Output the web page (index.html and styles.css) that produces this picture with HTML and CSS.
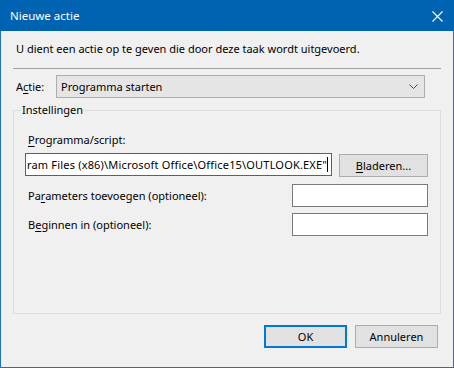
FILE: index.html
```html
<!DOCTYPE html>
<html lang="nl">
<head>
<meta charset="utf-8">
<title>Nieuwe actie</title>
<link rel="stylesheet" href="styles.css">
</head>
<body>
<div class="window">
  <div class="titlebar">
    <span class="title">Nieuwe actie</span>
    <svg class="close" width="11" height="11" viewBox="0 0 11 11"><path d="M0.5 0.5 L10.5 10.5 M10.5 0.5 L0.5 10.5" stroke="#fff" stroke-width="1.1" fill="none"/></svg>
  </div>
  <div class="content">
    <p class="intro">U dient een actie op te geven die door deze taak wordt uitgevoerd.</p>
    <div class="separator"></div>
    <div class="action-row">
      <span class="label">A<u>c</u>tie:</span>
      <div class="combo">
        <span>Programma starten</span>
        <svg width="9" height="5" viewBox="0 0 9 5"><path d="M0.5 0.5 L4.5 4.5 L8.5 0.5" stroke="#444" stroke-width="1" fill="none"/></svg>
      </div>
    </div>
    <fieldset class="group">
      <legend>Instellingen</legend>
      <div class="field-label"><u>P</u>rogramma/script:</div>
      <div class="program-row">
        <div class="textbox focused"><span class="path">ram Files (x86)\Microsoft Office\Office15\OUTLOOK.EXE"</span><span class="caret"></span></div>
        <div class="button browse"><u>B</u>laderen...</div>
      </div>
      <div class="param-row">
        <span>Pa<u>r</u>ameters toevoegen (optioneel):</span>
        <div class="textbox small"></div>
      </div>
      <div class="param-row">
        <span>B<u>e</u>ginnen in (optioneel):</span>
        <div class="textbox small"></div>
      </div>
    </fieldset>
    <div class="footer">
      <div class="button default">OK</div>
      <div class="button">Annuleren</div>
    </div>
  </div>
</div>
</body>
</html>
```
FILE: styles.css
```css
html, body {
  margin: 0;
  padding: 0;
  background: #f0f0f0;
}
body {
  font-family: "Noto Sans", "Open Sans", sans-serif;
  font-size: 11px;
  color: #000;
}
u { text-decoration-thickness: 1px; text-underline-offset: 2px; }
.window {
  width: 454px;
  height: 368px;
  box-sizing: border-box;
  border: 1px solid #1a73c4;
  border-top: none;
  display: flex;
  flex-direction: column;
  background: #f0f0f0;
}
.titlebar {
  height: 31px;
  margin: 0 -1px;
  background: #0063b1;
  color: #fff;
  display: flex;
  align-items: center;
  justify-content: space-between;
  padding: 0 11px 0 10px;
  flex: none;
}
.title { font-size: 11.5px; line-height: 16px; }
.close { display: block; margin-top: 1px; }
.content {
  flex: 1;
  display: flex;
  flex-direction: column;
}
.intro {
  margin: 10px 0 0 15px;
  line-height: 16px;
}
.separator {
  margin: 11px 12px 0 12px;
  border-top: 1px solid #a0a0a0;
  height: 0;
}
.action-row {
  display: flex;
  align-items: center;
  margin: 6px 0 0 15px;
}
.label { width: 40px; }
.combo {
  width: 369px;
  height: 23px;
  box-sizing: border-box;
  border: 1px solid #adadad;
  background: #e5e5e5;
  display: flex;
  align-items: center;
  justify-content: space-between;
  padding: 0 6px 0 4px;
}
.group {
  margin: 4px 12px 0 12px;
  border: 1px solid #dcdcdc;
  padding: 0 0 0 11px;
  height: 212px;
  box-sizing: border-box;
}
.group legend {
  padding: 0 1px;
  margin-left: -4px;
  line-height: 16px;
}
.field-label {
  margin: 14px 0 0 3px;
  line-height: 16px;
}
.program-row {
  display: flex;
  align-items: flex-start;
  margin-top: 5px;
}
.textbox {
  box-sizing: border-box;
  height: 23px;
  background: #fff;
  border: 1px solid #7a7a7a;
}
.textbox.focused {
  width: 307px;
  border-color: #0078d7;
  display: flex;
  align-items: center;
  overflow: hidden;
  white-space: nowrap;
  padding-left: 1px;
}
.path { letter-spacing: 0.18px; }
.caret {
  display: inline-block;
  width: 1px;
  height: 15px;
  background: #000;
  flex: none;
}
.button {
  box-sizing: border-box;
  width: 83px;
  height: 23px;
  border: 1px solid #adadad;
  background: #e1e1e1;
  display: flex;
  align-items: center;
  justify-content: center;
}
.button.browse {
  width: 89px;
  margin: 1px 0 0 7px;
}
.button.default {
  border: 2px solid #0078d7;
}
.param-row {
  display: flex;
  align-items: center;
  justify-content: space-between;
  width: 403px;
  margin-top: 7px;
  padding-left: 3px;
  box-sizing: border-box;
}
.param-row + .param-row { margin-top: 6px; }
.textbox.small { width: 136px; }
.footer {
  display: flex;
  justify-content: flex-end;
  gap: 8px;
  margin: 11px 15px 0 0;
}
```
